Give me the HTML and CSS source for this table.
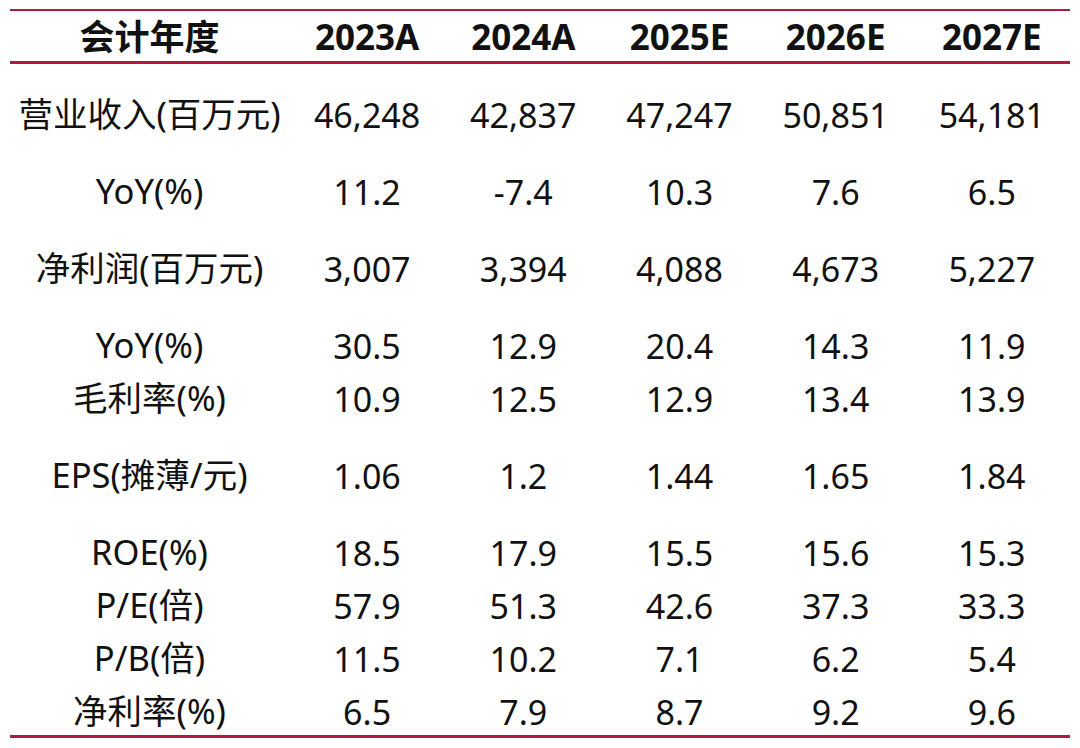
FILE: index.html
```html
<!DOCTYPE html>
<html lang="zh">
<head>
<meta charset="utf-8">
<title>财务预测</title>
<link rel="stylesheet" href="styles.css">
</head>
<body>
<div class="table">
  <div class="row head">
    <div class="cell label">会计年度</div>
    <div class="cell">2023A</div>
    <div class="cell">2024A</div>
    <div class="cell">2025E</div>
    <div class="cell">2026E</div>
    <div class="cell">2027E</div>
  </div>
  <div class="body">
    <div class="row spaced">
      <div class="cell label">营业收入(百万元)</div>
      <div class="cell">46,248</div><div class="cell">42,837</div><div class="cell">47,247</div><div class="cell">50,851</div><div class="cell">54,181</div>
    </div>
    <div class="row spaced">
      <div class="cell label">YoY(%)</div>
      <div class="cell">11.2</div><div class="cell">-7.4</div><div class="cell">10.3</div><div class="cell">7.6</div><div class="cell">6.5</div>
    </div>
    <div class="row spaced">
      <div class="cell label">净利润(百万元)</div>
      <div class="cell">3,007</div><div class="cell">3,394</div><div class="cell">4,088</div><div class="cell">4,673</div><div class="cell">5,227</div>
    </div>
    <div class="row spaced">
      <div class="cell label">YoY(%)</div>
      <div class="cell">30.5</div><div class="cell">12.9</div><div class="cell">20.4</div><div class="cell">14.3</div><div class="cell">11.9</div>
    </div>
    <div class="row">
      <div class="cell label">毛利率(%)</div>
      <div class="cell">10.9</div><div class="cell">12.5</div><div class="cell">12.9</div><div class="cell">13.4</div><div class="cell">13.9</div>
    </div>
    <div class="row spaced">
      <div class="cell label">EPS(摊薄/元)</div>
      <div class="cell">1.06</div><div class="cell">1.2</div><div class="cell">1.44</div><div class="cell">1.65</div><div class="cell">1.84</div>
    </div>
    <div class="row spaced">
      <div class="cell label">ROE(%)</div>
      <div class="cell">18.5</div><div class="cell">17.9</div><div class="cell">15.5</div><div class="cell">15.6</div><div class="cell">15.3</div>
    </div>
    <div class="row">
      <div class="cell label">P/E(倍)</div>
      <div class="cell">57.9</div><div class="cell">51.3</div><div class="cell">42.6</div><div class="cell">37.3</div><div class="cell">33.3</div>
    </div>
    <div class="row">
      <div class="cell label">P/B(倍)</div>
      <div class="cell">11.5</div><div class="cell">10.2</div><div class="cell">7.1</div><div class="cell">6.2</div><div class="cell">5.4</div>
    </div>
    <div class="row">
      <div class="cell label">净利率(%)</div>
      <div class="cell">6.5</div><div class="cell">7.9</div><div class="cell">8.7</div><div class="cell">9.2</div><div class="cell">9.6</div>
    </div>
  </div>
</div>
</body>
</html>
```

FILE: styles.css
```css
html, body {
  margin: 0;
  padding: 0;
  background: #ffffff;
}

body {
  width: 1080px;
  height: 748px;
  overflow: hidden;
  font-family: "Noto Sans", "Noto Sans CJK SC", sans-serif;
  color: #111111;
}

.table {
  margin: 9px 10px 0 10px;
  width: 1060px;
  border-top: 2px solid #b3183f;
}

.row {
  display: grid;
  grid-template-columns: 279px repeat(5, 156.2px);
  height: 53px;
  flex-shrink: 0;
  align-items: center;
}

.row.head {
  height: 50px;
  font-weight: 700;
  border-bottom: 3px solid #b3183f;
}

.body {
  display: flex;
  flex-direction: column;
  height: 674px;
  box-sizing: border-box;
  border-bottom: 3px solid #b3183f;
}

.row.spaced {
  margin-top: 24px;
}

.cell {
  text-align: center;
  font-size: 34px;
  line-height: 1;
  white-space: nowrap;
}

.label {
  font-size: 34.5px;
}

.head .cell {
  font-size: 35px;
}
```
